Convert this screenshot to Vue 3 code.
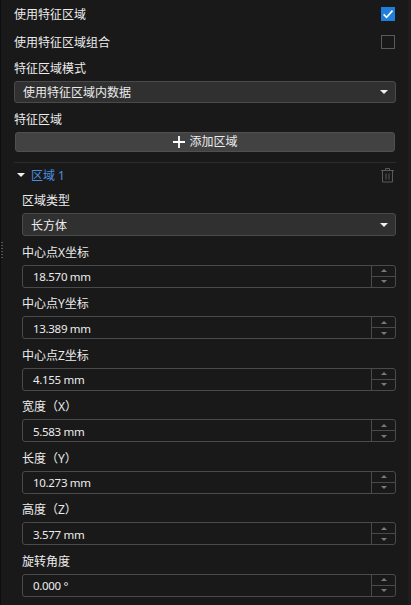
<script setup>
const fields = [
  { label: '中心点X坐标', value: '18.570 mm' },
  { label: '中心点Y坐标', value: '13.389 mm' },
  { label: '中心点Z坐标', value: '4.155 mm' },
  { label: '宽度（X）', value: '5.583 mm' },
  { label: '长度（Y）', value: '10.273 mm' },
  { label: '高度（Z）', value: '3.577 mm' },
  { label: '旋转角度', value: '0.000 °' },
]
</script>

<template>
  <div class="panel">
    <div class="handle"></div>
    <div class="content">
      <div class="check-row">
        <span class="text">使用特征区域</span>
        <span class="box checked">
          <svg width="14" height="14" viewBox="0 0 14 14"><path d="M2.6 7.4 5.6 10.3 11.5 3.6" fill="none" stroke="#fff" stroke-width="1.6" /></svg>
        </span>
      </div>
      <div class="check-row second">
        <span class="text">使用特征区域组合</span>
        <span class="box"></span>
      </div>
      <div class="label first">特征区域模式</div>
      <div class="combo top">
        <span class="text">使用特征区域内数据</span>
        <i class="arrow"></i>
      </div>
      <div class="label section">特征区域</div>
      <button class="add">
        <svg width="14" height="14" viewBox="0 0 14 14"><path d="M7 1v12M1 7h12" stroke="#fff" stroke-width="1.800" fill="none" /></svg>
        <span>添加区域</span>
      </button>
      <div class="divider"></div>
      <div class="region-head">
        <i class="arrow head-arrow"></i>
        <span class="region-name text">区域 1</span>
        <svg class="trash" width="13" height="15" viewBox="0 0 13 15">
          <path d="M0 2.500h13M4.500 2.500V0.500h4V2.500M1.500 2.500v11.500h10V2.500M5 5.500v6M8 5.500v6" fill="none" stroke="#5a5a5a" stroke-width="1" />
        </svg>
      </div>
      <div class="region-body">
        <div class="label type-label">区域类型</div>
        <div class="combo sub">
          <span class="text">长方体</span>
          <i class="arrow"></i>
        </div>
        <div v-for="f in fields" :key="f.label" class="field">
          <div class="label">{{ f.label }}</div>
          <div class="spin">
            <span class="value text">{{ f.value }}</span>
            <div class="steps">
              <div class="step"><i class="tri up"></i></div>
              <div class="step"><i class="tri down"></i></div>
            </div>
          </div>
        </div>
      </div>
    </div>
    <div class="edge"></div>
  </div>
</template>

<style>
html, body { margin: 0; background: #191919; overflow: hidden; }
</style>

<style scoped>
.panel {
  position: relative;
  width: 411px;
  height: 605px;
  display: flex;
  overflow: hidden;
  background: #191919;
  color: #ececec;
  font: 12px/16px "Noto Sans", "Noto Sans CJK SC", sans-serif;
  box-sizing: border-box;
  border-left: 1px solid #0e0e0e;
}
.handle {
  position: absolute;
  left: 0;
  top: 242px;
  width: 2px;
  height: 16px;
  background: repeating-linear-gradient(#555 0 1px, transparent 1px 3px);
}
.content {
  width: 382px;
  margin-left: 13px;
  flex: none;
}
.edge {
  position: absolute;
  right: 0;
  top: 0;
  bottom: 0;
  width: 3px;
  background: #1d1d1d;
}
.text { padding-top: 2px; }
.check-row {
  height: 28px;
  display: flex;
  align-items: center;
  justify-content: space-between;
}
.box {
  width: 14px;
  height: 14px;
  box-sizing: border-box;
  border: 1px solid #5a5a5a;
  margin-right: 1px;
  display: block;
}
.box.checked {
  background: #1e7fdc;
  border: 0;
}
.box svg { display: block; }
.label { height: 16px; line-height: 18px; white-space: nowrap; }
.label.first { margin-top: 4px; }
.label.section { margin-top: 8px; }
.combo {
  height: 23px;
  box-sizing: border-box;
  margin-top: 5px;
  padding: 0 7px 0 8px;
  border: 1px solid #4a4a4a;
  border-radius: 3px;
  background: #303030;
  display: flex;
  align-items: center;
  justify-content: space-between;
}
.combo.top { height: 22px; }
.combo.sub {
  margin-top: 5.4px;
}
.arrow {
  width: 0;
  height: 0;
  border-left: 4.5px solid transparent;
  border-right: 4.5px solid transparent;
  border-top: 4.5px solid #f0f0f0;
  display: block;
}
.add {
  display: flex;
  align-items: center;
  justify-content: center;
  gap: 3px;
  width: 380px;
  height: 20px;
  margin: 5px 0 0 1px;
  padding: 0;
  box-sizing: border-box;
  border: 1px solid #505050;
  border-radius: 3px;
  background: #424242;
  color: #ececec;
  font: inherit;
}
.divider {
  height: 1px;
  margin-top: 10px;
  background: #2c2c2c;
}
.region-head {
  display: flex;
  align-items: center;
  height: 24px;
  margin-top: 0;
}
.head-arrow { margin: 0 6px 0 3px; }
.region-name { color: #4b8fe0; }
.trash { margin-left: auto; margin-right: 2px; }
.region-body { padding-left: 8px; }
.type-label { margin-top: 5px; }
.field {
  height: 51.500px;
  display: flex;
  flex-direction: column;
  justify-content: flex-end;
}
.spin {
  height: 23px;
  margin-top: 5px;
  box-sizing: border-box;
  border: 1px solid #4a4a4a;
  border-radius: 3px;
  display: flex;
  align-items: center;
  justify-content: space-between;
  color: #ececec;
}
.value { padding-left: 10px; font-size: 11.5px; letter-spacing: -0.3px; }
.steps {
  width: 23px;
  height: 100%;
  border-left: 1px solid #4a4a4a;
  display: flex;
  flex-direction: column;
}
.step {
  flex: 1;
  display: flex;
  align-items: center;
  justify-content: center;
}
.step + .step { border-top: 1px solid #4a4a4a; }
.tri {
  width: 0;
  height: 0;
  border-left: 3px solid transparent;
  border-right: 3px solid transparent;
  display: block;
}
.tri.up { border-bottom: 3px solid #7a7a7a; }
.tri.down { border-top: 3px solid #7a7a7a; }
</style>
